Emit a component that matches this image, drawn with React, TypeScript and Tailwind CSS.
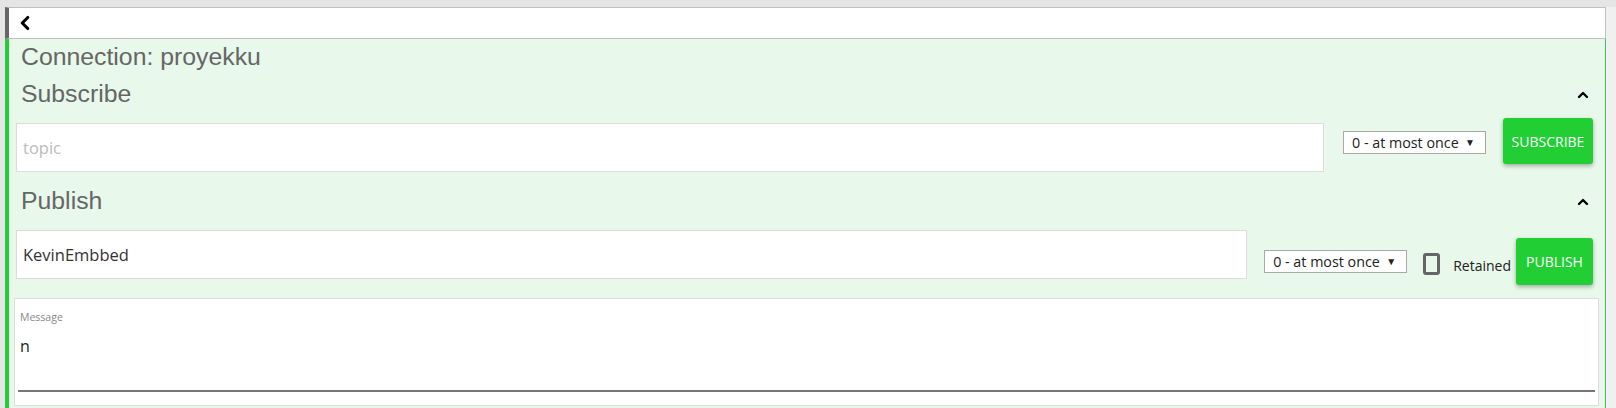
import { ChevronLeft, ChevronUp } from "lucide-react";

const uiFont = "font-['Open_Sans','Noto_Sans',sans-serif]";
const headFont = "font-['Liberation_Sans',Arial,sans-serif]";

const QosSelect = () => (
  <div className={`flex h-[23px] w-[143px] items-center justify-between border border-[#a9a9a9] bg-white pl-[8px] pr-[10px] text-[14.3px] text-[#222] ${uiFont}`}>
    <span>0 - at most once</span>
    <span className="text-[10px]">▼</span>
  </div>
);

const App = (): JSX.Element => {
  return (
    <div className="flex h-[408px] w-full overflow-hidden bg-[#e5e5e5] pt-[7px]">
      <div className="ml-[5px] flex w-[1601px] flex-col">
        <header className="flex h-[32px] items-center border-y border-r border-l-4 border-y-[#c0c0c0] border-r-[#c0c0c0] border-l-[#666] bg-white pl-[5px]">
          <ChevronLeft size={22} strokeWidth={3.4} className="text-black" />
        </header>

        <main className="flex flex-1 flex-col border-r border-l-4 border-r-[#3cc94a] border-l-[#21cf35] bg-[#e8f8ea]">
          <h1 className={`mt-[4px] pl-[12px] text-[24.8px] leading-[28px] text-[#666] ${headFont}`}>
            Connection: proyekku
          </h1>

          <div className="mt-[9px] flex items-center justify-between pl-[12px] pr-[14px]">
            <h2 className={`text-[24.8px] leading-[28px] text-[#666] ${headFont}`}>Subscribe</h2>
            <ChevronUp size={16} strokeWidth={3.5} className="mt-[2px] text-black" />
          </div>

          <div className="mt-[10px] ml-[7px] mr-[12px] flex items-start">
            <input
              placeholder="topic"
              className={`mt-[5px] h-[49px] flex-1 border border-[#dcdcdc] bg-white px-[6px] text-[16.5px] text-[#333] outline-none placeholder:text-[#bbb] ${uiFont}`}
            />
            <div className="mt-[13px] ml-[19px]">
              <QosSelect />
            </div>
            <button
              type="button"
              className={`ml-[17px] h-[46px] w-[90px] rounded-[3px] bg-[#21cf35] text-[14px] text-white shadow-[0_2px_4px_rgba(0,0,0,0.3)] ${uiFont}`}
            >
              SUBSCRIBE
            </button>
          </div>

          <div className="mt-[15px] flex items-center justify-between pl-[12px] pr-[14px]">
            <h2 className={`text-[24.8px] leading-[28px] text-[#666] ${headFont}`}>Publish</h2>
            <ChevronUp size={16} strokeWidth={3.5} className="mt-[2px] text-black" />
          </div>

          <div className="mt-[15px] ml-[7px] mr-[12px] flex items-start">
            <input
              defaultValue="KevinEmbbed"
              className={`h-[49px] flex-1 border border-[#dcdcdc] bg-white px-[6px] text-[16.5px] text-[#333] outline-none ${uiFont}`}
            />
            <div className="mt-[20px] ml-[17px]">
              <QosSelect />
            </div>
            <span className="mt-[23px] ml-[16px] h-[22px] w-[17px] rounded-[3px] border-[3px] border-[#666]" />
            <span className={`mt-[25px] ml-[13px] text-[14px] text-[#222] ${uiFont}`}>Retained</span>
            <button
              type="button"
              className={`mt-[8px] ml-[5px] h-[47px] w-[77px] rounded-[3px] bg-[#21cf35] text-[14px] text-white shadow-[0_2px_4px_rgba(0,0,0,0.3)] ${uiFont}`}
            >
              PUBLISH
            </button>
          </div>

          <div className="mt-[13px] ml-[5px] mr-[6px] h-[108px] border border-[#dcdcdc] bg-white px-[3px] pt-[11px]">
            <label className={`block pl-[2px] text-[10.5px] leading-[14px] text-[#888] ${uiFont}`}>Message</label>
            <textarea
              defaultValue="n"
              rows={2}
              className={`mt-[11px] block h-[57px] w-full resize-none border-b-2 border-b-[#777] bg-white pl-[2px] text-[16px] leading-[22px] text-[#222] outline-none ${uiFont}`}
            />
          </div>
        </main>
      </div>
      <div className="flex-1 bg-[#f0f0f0]" />
    </div>
  );
};

export default App;
